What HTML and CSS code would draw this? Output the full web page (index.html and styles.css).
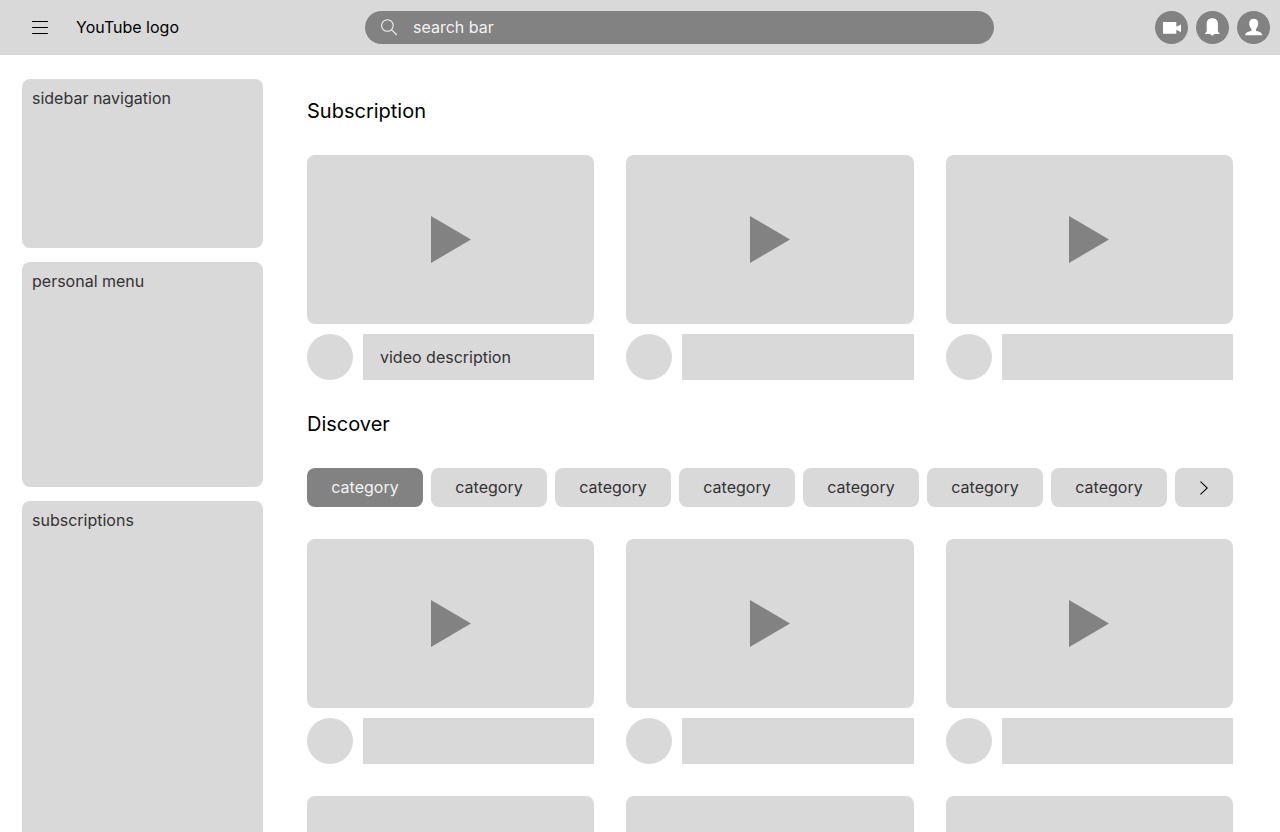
FILE: index.html
```html
<!DOCTYPE html>
<html lang="en">
<head>
<meta charset="utf-8">
<meta name="viewport" content="width=device-width, initial-scale=1">
<title>YouTube wireframe</title>
<link rel="stylesheet" href="styles.css">
</head>
<body>
<svg class="defs" aria-hidden="true">
  <symbol id="play" viewBox="0 0 40 47"><path d="M0 0L40 23.5L0 47Z"/></symbol>
</svg>
<header class="topbar">
  <div class="brand">
    <button class="menu" type="button" aria-label="Menu">
      <svg width="16" height="14" viewBox="0 0 16 14"><path d="M0.5 0.5H15.5M0.5 6.5H15.5M0.5 12.5H15.5" fill="none" stroke="#000" stroke-width="1.1" stroke-linecap="round"/></svg>
    </button>
    <a class="logo" href="#">YouTube logo</a>
  </div>
  <form class="search" role="search">
    <svg width="17" height="17" viewBox="0 0 17 17" aria-hidden="true"><path d="M12.2 6.5A5.8 5.8 0 1 1 0.6 6.500A5.800 5.800 0 1 1 12.200 6.500M10.500 10.700L15.800 16" fill="none" stroke="#f2f2f2" stroke-width="1.1"/></svg>
    <input class="search-input" type="text" placeholder="search bar" aria-label="search bar">
  </form>
  <div class="actions">
    <button class="round" type="button" aria-label="Create"><svg viewBox="0 0 33 33"><path d="M8 11H21.300V15.500L22.500 15.300L26 13.400V21.200L22.500 19.200L21.300 19V22.700H8Z"/></svg></button>
    <button class="round" type="button" aria-label="Notifications"><svg viewBox="0 0 33 33"><path d="M16.300 7.300C19.900 7.300 21.900 9.400 21.900 13V19C21.900 20.800 22.400 21.800 23.600 22.200V23.100H18.300C18.200 24.900 14.400 24.900 14.300 23.100H9V22.200C10.200 21.800 10.700 20.800 10.700 19V13C10.700 9.400 12.700 7.300 16.300 7.300Z"/></svg></button>
    <button class="round" type="button" aria-label="Account"><svg viewBox="0 0 33 33"><path d="M16.700 7.800C19.700 7.800 21.200 9.600 21.200 12.500C21.200 14.800 20.300 16.700 19 17.900V19.700C22 20.800 25 21.200 25.200 24.200H8.200C8.400 21.200 11.400 20.800 14.400 19.700V17.900C13.100 16.700 12.200 14.800 12.200 12.500C12.200 9.600 13.700 7.800 16.700 7.800Z"/></svg></button>
  </div>
</header>
<div class="layout">
  <aside class="sidebar">
    <nav class="panel panel-nav">sidebar navigation</nav>
    <section class="panel panel-personal">personal menu</section>
    <section class="panel panel-subs">subscriptions</section>
  </aside>
  <main class="content">
    <h2 class="heading">Subscription</h2>
    <div class="videos">
      <article class="video"><div class="thumb"><svg class="play"><use href="#play"/></svg></div><div class="meta"><div class="avatar"></div><p class="desc">video description</p></div></article>
      <article class="video"><div class="thumb"><svg class="play"><use href="#play"/></svg></div><div class="meta"><div class="avatar"></div><p class="desc"></p></div></article>
      <article class="video"><div class="thumb"><svg class="play"><use href="#play"/></svg></div><div class="meta"><div class="avatar"></div><p class="desc"></p></div></article>
    </div>
    <h2 class="heading">Discover</h2>
    <div class="chips">
      <button class="chip chip-active" type="button">category</button>
      <button class="chip" type="button">category</button>
      <button class="chip" type="button">category</button>
      <button class="chip" type="button">category</button>
      <button class="chip" type="button">category</button>
      <button class="chip" type="button">category</button>
      <button class="chip" type="button">category</button>
      <button class="chip chip-next" type="button" aria-label="More categories"><svg width="8" height="14" viewBox="0 0 8 14"><path d="M0.500 0.700L7.300 7L0.500 13.300" fill="none" stroke="#000" stroke-width="1.100"/></svg></button>
    </div>
    <div class="videos">
      <article class="video"><div class="thumb"><svg class="play"><use href="#play"/></svg></div><div class="meta"><div class="avatar"></div><p class="desc"></p></div></article>
      <article class="video"><div class="thumb"><svg class="play"><use href="#play"/></svg></div><div class="meta"><div class="avatar"></div><p class="desc"></p></div></article>
      <article class="video"><div class="thumb"><svg class="play"><use href="#play"/></svg></div><div class="meta"><div class="avatar"></div><p class="desc"></p></div></article>
      <article class="video"><div class="thumb"><svg class="play"><use href="#play"/></svg></div><div class="meta"><div class="avatar"></div><p class="desc"></p></div></article>
      <article class="video"><div class="thumb"><svg class="play"><use href="#play"/></svg></div><div class="meta"><div class="avatar"></div><p class="desc"></p></div></article>
      <article class="video"><div class="thumb"><svg class="play"><use href="#play"/></svg></div><div class="meta"><div class="avatar"></div><p class="desc"></p></div></article>
    </div>
  </main>
</div>
</body>
</html>
```
FILE: styles.css
```css
* { box-sizing: border-box; }

body {
  margin: 0;
  height: 100vh;
  overflow: hidden;
  display: flex;
  flex-direction: column;
  background: #fff;
  color: #333;
  font: 400 16px/20px Inter, "Liberation Sans", sans-serif;
}

button, input { font: inherit; color: inherit; border: 0; padding: 0; }
button { cursor: pointer; }
.defs { display: none; }

.topbar {
  flex: none;
  display: grid;
  grid-template-columns: 333px minmax(0, 629px) 1fr;
  align-items: center;
  height: 55px;
  padding: 0 10px 0 32px;
  background: #d9d9d9;
}
.brand { display: flex; align-items: center; gap: 28px; }
.menu { display: flex; background: none; }
.logo { padding-bottom: 2px; color: #000; text-decoration: none; }

.search {
  display: flex;
  align-items: center;
  gap: 15px;
  height: 33px;
  padding: 0 16px;
  border-radius: 17px;
  background: #828282;
}
.search svg { flex: none; }
.search-input { flex: 1; min-width: 0; padding-bottom: 2px; background: none; outline: 0; color: #f2f2f2; }
.search-input::placeholder { color: #f2f2f2; opacity: 1; }

.actions { display: flex; justify-content: flex-end; gap: 8px; }
.round { display: block; width: 33px; height: 33px; border-radius: 50%; background: #828282; }
.round svg { display: block; fill: #fff; }

.layout { flex: 1; min-height: 0; display: flex; gap: 44px; padding: 0 47px 0 22px; }

.sidebar { flex: none; width: 241px; display: flex; flex-direction: column; gap: 14px; padding-top: 24px; }
.panel { padding: 9px 10px; border-radius: 8px; background: #d9d9d9; }
.panel-nav { flex: none; height: 169px; }
.panel-personal { flex: none; height: 225px; }
.panel-subs { flex: 1; border-radius: 8px 8px 0 0; }

.content { flex: 1; min-width: 0; overflow: hidden; display: flex; flex-direction: column; gap: 32px; padding-top: 44px; }
.heading { margin: 0; font-size: 20px; line-height: 24px; font-weight: 400; color: #000; }

.videos { display: grid; grid-template-columns: repeat(3, 1fr); gap: 32px; }
.video { display: flex; flex-direction: column; gap: 10px; }
.thumb {
  display: flex;
  align-items: center;
  justify-content: center;
  height: 169px;
  border-radius: 8px;
  background: #d9d9d9;
}
.play { width: 40px; height: 47px; fill: #828282; }
.meta { display: flex; gap: 10px; height: 46px; }
.avatar { flex: none; width: 46px; border-radius: 50%; background: #d9d9d9; }
.desc { flex: 1; margin: 0; padding: 13px 17px; background: #d9d9d9; }

.chips { display: flex; gap: 8px; }
.chip {
  flex: 2 1 16px;
  display: flex;
  align-items: center;
  justify-content: center;
  height: 39px;
  padding-bottom: 2px;
  border-radius: 8px;
  background: #d9d9d9;
}
.chip-active { background: #828282; color: #f2f2f2; }
.chip-next { flex: 1 1 8px; padding: 0; }
```
